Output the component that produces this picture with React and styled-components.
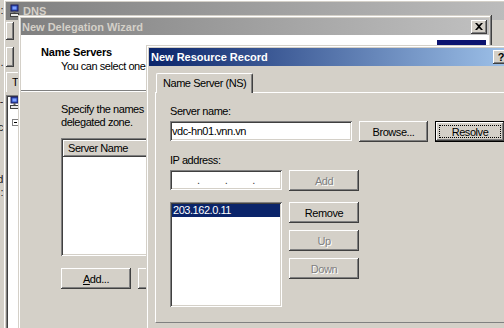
import React from 'react'
import styled, { createGlobalStyle, css } from 'styled-components'

const FACE = '#d4d0c8'
const SHADOW = '#808080'
const DARK = '#404040'

const GlobalStyle = createGlobalStyle`
  * { box-sizing: border-box; }
  html, body { margin: 0; padding: 0; background: ${FACE}; }
  body {
    font-family: "Liberation Sans", Arial, sans-serif;
    font-size: 11px;
    letter-spacing: -0.45px;
    color: #000;
  }
`

// classic 3d edges
const raised = css`
  box-shadow: inset -1px -1px ${DARK}, inset 1px 1px #fff, inset -2px -2px ${SHADOW}, inset 2px 2px ${FACE};
`
const frame = css`
  box-shadow: inset -1px -1px ${DARK}, inset 1px 1px ${FACE}, inset -2px -2px ${SHADOW}, inset 2px 2px #fff;
`
const sunken = css`
  box-shadow: inset 1px 1px ${SHADOW}, inset -1px -1px #fff, inset 2px 2px ${DARK}, inset -2px -2px ${FACE};
`

const Desktop = styled.div`
  position: relative;
  width: 504px;
  height: 328px;
  overflow: hidden;
  background: ${FACE};
`

const BehindStrip = styled.div`
  position: absolute;
  left: 0;
  top: 0;
  width: 3px;
  height: 328px;
  overflow: hidden;
  display: flex;
  flex-direction: column;
  padding-top: 4px;
`

const BehindLine = styled.div`
  height: 13px;
  display: flex;
  justify-content: flex-end;
  white-space: nowrap;
  color: #202020;
`

const Window = styled.div`
  position: absolute;
  left: ${p => p.$x}px;
  top: ${p => p.$y}px;
  width: ${p => p.$w}px;
  height: ${p => p.$h}px;
  padding: 3px;
  display: flex;
  flex-direction: column;
  background: ${FACE};
  ${frame}
`

const TitleBar = styled.div`
  flex: none;
  height: ${p => p.$h}px;
  display: flex;
  align-items: center;
  gap: 2px;
  padding: 0 2px 0 ${p => p.$pl}px;
  background: ${p => (p.$active
    ? 'linear-gradient(to right, #0a246a, #a6caf0)'
    : 'linear-gradient(to right, #808080, #c0c0c0)')};
  color: ${p => (p.$active ? '#fff' : '#d4d0c8')};
  font-weight: bold;
  letter-spacing: 0;
`

const TitleText = styled.span`
  flex: 1;
  white-space: nowrap;
  overflow: hidden;
`

const CaptionButton = styled.div`
  flex: none;
  width: 16px;
  height: 14px;
  display: flex;
  align-items: center;
  justify-content: center;
  background: ${FACE};
  color: #000;
  font-weight: bold;
  font-size: 11px;
  ${raised}
`

/* ---- DNS console behind ---- */

const MmcBody = styled.div`
  flex: 1;
  display: flex;
  flex-direction: column;
  align-items: flex-start;
`

const Grip = styled.div`
  width: 8px;
  height: ${p => p.$h}px;
  margin-top: ${p => p.$mt}px;
  ${raised}
`

const MmcTab = styled.div`
  margin-top: 5px;
  width: 60px;
  height: 20px;
  padding: 3px 0 0 5px;
  border-top: 1px solid #fff;
  border-left: 1px solid #fff;
  color: #000;
`

const TreePane = styled.div`
  margin-top: 3px;
  width: 200px;
  flex: 1;
  background: #fff;
  padding: 1px 0 0 4px;
  display: flex;
  flex-direction: column;
  gap: 9px;
  ${sunken}
`

const MinusBox = styled.div`
  margin-left: 2px;
  width: 7px;
  height: 7px;
  border: 1px solid ${SHADOW};
  display: flex;
  align-items: center;
  justify-content: center;
  &::after {
    content: '';
    width: 3px;
    height: 1px;
    background: #000;
  }
`

/* ---- wizard ---- */

const WizardHeader = styled.div`
  flex: none;
  height: 56px;
  background: #fff;
  display: flex;
  justify-content: space-between;
  border-bottom: 1px solid ${SHADOW};
  box-shadow: 0 1px #fff;
`

const HeaderText = styled.div`
  padding: 10px 0 0 20px;
  white-space: nowrap;
`

const HeaderTitle = styled.div`
  font-weight: bold;
  letter-spacing: -0.2px;
  line-height: 14px;
`

const HeaderSub = styled.div`
  padding-left: 20px;
  line-height: 14px;
`

const WizardArt = styled.div`
  flex: none;
  width: 49px;
  height: 49px;
  margin: 5px 3px 0 0;
  background: #0c1470;
`

const WizardBody = styled.div`
  flex: 1;
  padding: 11px 0 0 40px;
  margin-top: 1px;
  display: flex;
  flex-direction: column;
  align-items: flex-start;
`

const Para = styled.div`
  line-height: 13px;
  white-space: nowrap;
`

const ServerList = styled.div`
  margin-top: 9px;
  width: 380px;
  height: 118px;
  background: #fff;
  padding: 2px;
  ${sunken}
`

const ListHeader = styled.div`
  display: flex;
  height: 17px;
`

const HeaderCell = styled.div`
  width: ${p => p.$w}px;
  padding: 2px 0 0 5px;
  background: ${FACE};
  ${raised}
`

const ButtonRow = styled.div`
  margin-top: 12px;
  display: flex;
  gap: 7px;
`

/* ---- resource record dialog ---- */

const DialogBody = styled.div`
  flex: 1;
  padding: 7px 0 0 6px;
  display: flex;
  flex-direction: column;
`

const TabStrip = styled.div`
  display: flex;
  height: 19px;
  padding-left: 1px;
  position: relative;
  z-index: 1;
`

const Tab = styled.div`
  height: 20px;
  padding: 3px 6px 0;
  background: ${FACE};
  border-top: 1px solid #fff;
  border-left: 1px solid #fff;
  border-right: 1px solid ${DARK};
  border-radius: 2px 2px 0 0;
  box-shadow: inset -1px 0 ${SHADOW};
  white-space: nowrap;
`

const TabPanel = styled.div`
  height: 231px;
  border-top: 1px solid #fff;
  border-left: 1px solid #fff;
  border-bottom: 1px solid ${SHADOW};
  padding: 12px 0 0 14px;
  display: flex;
  flex-direction: column;
  align-items: flex-start;
`

const FieldLabel = styled.div`
  line-height: 13px;
  margin: ${p => p.$mt}px 0 3px;
`

const FormRow = styled.div`
  display: flex;
  align-items: flex-start;
  gap: 7px;
`

const Field = styled.div`
  width: ${p => p.$w}px;
  height: 20px;
  padding: 0 2px;
  background: #fff;
  display: flex;
  align-items: center;
  white-space: nowrap;
  ${sunken}
`

const IpDots = styled.div`
  flex: 1;
  display: flex;
  justify-content: space-evenly;
  color: ${DARK};
`

const Button = styled.div`
  position: relative;
  flex: none;
  width: ${p => p.$w || 70}px;
  height: 21px;
  display: flex;
  align-items: center;
  justify-content: center;
  background: ${FACE};
  color: ${p => (p.$disabled ? SHADOW : '#000')};
  text-shadow: ${p => (p.$disabled ? '1px 1px 0 #fff' : 'none')};
  ${p => (p.$default
    ? css`
      box-shadow: inset 0 0 0 1px #000, inset -2px -2px ${DARK}, inset 2px 2px #fff,
        inset -3px -3px ${SHADOW}, inset 3px 3px ${FACE};
      &::after {
        content: '';
        position: absolute;
        inset: 4px;
        border: 1px dotted #000;
      }
    `
    : raised)}
`

const ListSection = styled.div`
  margin-top: 11px;
  display: flex;
  gap: 7px;
`

const AddressList = styled.div`
  width: 112px;
  height: 105px;
  padding: 2px;
  background: #fff;
  ${sunken}
`

const ListItem = styled.div`
  height: 13px;
  line-height: 13px;
  padding-left: 1px;
  background: ${p => (p.$selected ? '#0a246a' : 'transparent')};
  color: ${p => (p.$selected ? '#fff' : '#000')};
`

const ButtonColumn = styled.div`
  display: flex;
  flex-direction: column;
  gap: 7px;
`

const DnsIcon = () => (
  <svg width="9" height="14" viewBox="0 0 9 14">
    <rect x="1" y="1" width="7" height="6" fill="#2c4cb8" stroke="#1a1a60" strokeWidth="1" />
    <rect x="2.5" y="2.5" width="4" height="3" fill="#7fa0ff" />
    <rect x="3.5" y="7" width="2" height="2" fill="#606060" />
    <rect x="0.5" y="9.5" width="8" height="3" fill="#e8e8e8" stroke="#404040" strokeWidth="1" />
  </svg>
)

const CloseGlyph = () => (
  <svg width="8" height="7" viewBox="0 0 8 7">
    <path d="M0 0h2l2 2 2-2h2L5 3.5 8 7H6L4 5 2 7H0l3-3.5z" fill="#000" />
  </svg>
)

const behind = [':', '', '', '', '.', '', '', '-', '', 'c', '', '', '', 'd', ':']

export default function App() {
  return (
    <Desktop>
      <GlobalStyle />

      <BehindStrip>
        {behind.map((ch, i) => <BehindLine key={i}>{ch}</BehindLine>)}
      </BehindStrip>

      <Window $x={3} $y={-1} $w={540} $h={340}>
        <TitleBar $h={18} $pl={4}>
          <DnsIcon />
          <TitleText style={{ marginLeft: 2 }}>DNS</TitleText>
        </TitleBar>
        <MmcBody>
          <Grip $h={18} $mt={2} />
          <Grip $h={20} $mt={7} />
          <MmcTab>Tree</MmcTab>
          <TreePane>
            <DnsIcon />
            <MinusBox />
          </TreePane>
        </MmcBody>
      </Window>

      <Window $x={18} $y={15} $w={474} $h={330}>
        <TitleBar $h={17} $pl={1}>
          <TitleText>New Delegation Wizard</TitleText>
          <CaptionButton><CloseGlyph /></CaptionButton>
        </TitleBar>
        <WizardHeader>
          <HeaderText>
            <HeaderTitle>Name Servers</HeaderTitle>
            <HeaderSub>You can select one or more name servers to host the delegated zone.</HeaderSub>
          </HeaderText>
          <WizardArt />
        </WizardHeader>
        <WizardBody>
          <Para>
            Specify the names and IP addresses of the DNS servers you want to have host the
            <br />
            delegated zone.
          </Para>
          <ServerList>
            <ListHeader>
              <HeaderCell $w={160}>Server Name</HeaderCell>
              <HeaderCell $w={216}>IP Address</HeaderCell>
            </ListHeader>
          </ServerList>
          <ButtonRow>
            <Button><span><u>A</u>dd...</span></Button>
            <Button>Edit...</Button>
            <Button>Remove</Button>
          </ButtonRow>
        </WizardBody>
      </Window>

      <Window $x={146} $y={45} $w={386} $h={300}>
        <TitleBar $h={18} $pl={2} $active>
          <TitleText>New Resource Record</TitleText>
          <CaptionButton>?</CaptionButton>
          <CaptionButton><CloseGlyph /></CaptionButton>
        </TitleBar>
        <DialogBody>
          <TabStrip>
            <Tab>Name Server (NS)</Tab>
          </TabStrip>
          <TabPanel>
            <FieldLabel $mt={0}>Server name:</FieldLabel>
            <FormRow>
              <Field $w={182}>vdc-hn01.vnn.vn</Field>
              <Button $w={69}>Browse...</Button>
              <Button $default>Resolve</Button>
            </FormRow>
            <FieldLabel $mt={12}>IP address:</FieldLabel>
            <FormRow>
              <Field $w={112}>
                <IpDots><span>.</span><span>.</span><span>.</span></IpDots>
              </Field>
              <Button $disabled>Add</Button>
            </FormRow>
            <ListSection>
              <AddressList>
                <ListItem $selected>203.162.0.11</ListItem>
              </AddressList>
              <ButtonColumn>
                <Button>Remove</Button>
                <Button $disabled>Up</Button>
                <Button $disabled>Down</Button>
              </ButtonColumn>
            </ListSection>
          </TabPanel>
        </DialogBody>
      </Window>
    </Desktop>
  )
}
